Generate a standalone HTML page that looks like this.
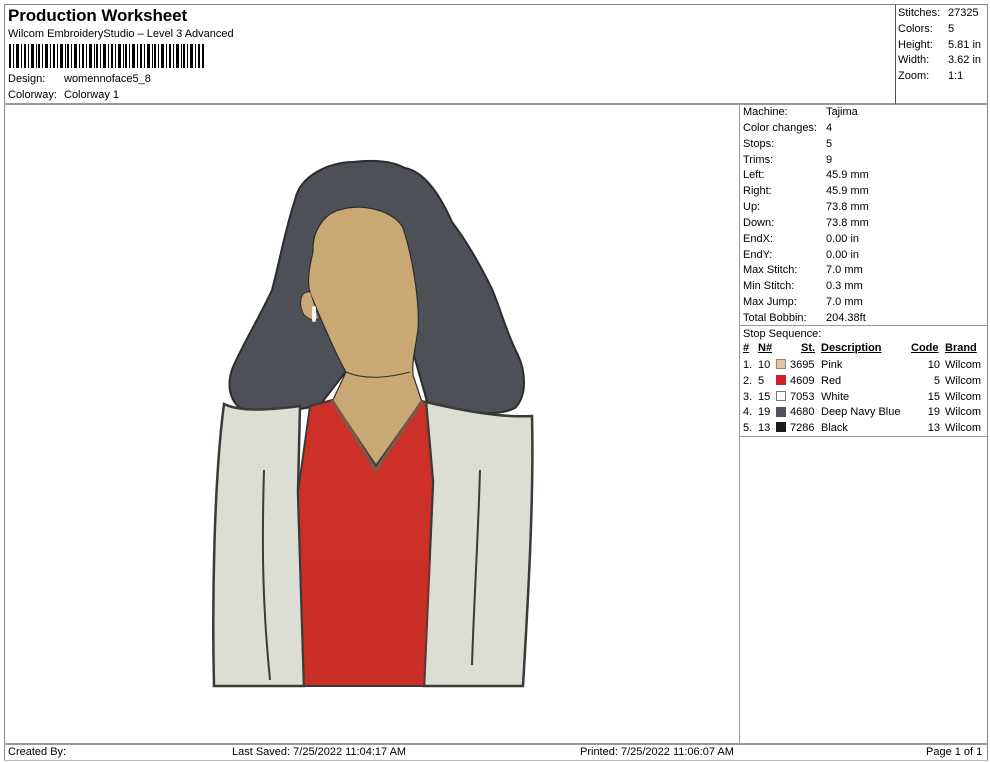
<!DOCTYPE html>
<html><head><meta charset="utf-8"><style>
*{margin:0;padding:0;box-sizing:border-box}
body{width:990px;height:762px;background:#fff;font-family:"Liberation Sans",Arial,sans-serif;color:#000;position:relative;overflow:hidden;font-size:11px}
.a{position:absolute;white-space:nowrap}
.ln{position:absolute;background:#888}
</style></head><body>
<div class="ln" style="left:4px;top:4px;width:983px;height:1px"></div>
<div class="ln" style="left:4px;top:4px;width:1px;height:757px"></div>
<div class="ln" style="left:987px;top:4px;width:1px;height:757px"></div>
<div class="ln" style="left:4px;top:103px;width:983px;height:2px;background:#999"></div>
<div class="ln" style="left:895px;top:4px;width:1px;height:100px;background:#555"></div>
<div class="ln" style="left:739px;top:104px;width:1px;height:640px;background:#999"></div>
<div class="ln" style="left:740px;top:325px;width:247px;height:1px;background:#999"></div>
<div class="ln" style="left:740px;top:436px;width:247px;height:1px;background:#999"></div>
<div class="ln" style="left:4px;top:743px;width:983px;height:2px;background:#999"></div>
<div class="ln" style="left:4px;top:760px;width:983px;height:1px;background:#bbb"></div>

<div class="a" style="left:8px;top:6px;font-size:17px;font-weight:bold;letter-spacing:-0.1px">Production Worksheet</div>
<div class="a" style="left:8px;top:28px">Wilcom EmbroideryStudio – Level 3 Advanced</div>
<svg class="a" style="left:9px;top:44px" width="196" height="24">
<g fill="#000">
<rect x="0" y="0" width="2" height="24"/><rect x="4" y="0" width="1" height="24"/><rect x="7" y="0" width="3" height="24"/><rect x="12" y="0" width="1" height="24"/><rect x="15" y="0" width="2" height="24"/><rect x="19" y="0" width="1" height="24"/><rect x="22" y="0" width="3" height="24"/><rect x="27" y="0" width="1" height="24"/><rect x="29" y="0" width="2" height="24"/><rect x="33" y="0" width="1" height="24"/><rect x="36" y="0" width="3" height="24"/><rect x="41" y="0" width="1" height="24"/><rect x="44" y="0" width="2" height="24"/><rect x="48" y="0" width="1" height="24"/><rect x="51" y="0" width="3" height="24"/><rect x="56" y="0" width="1" height="24"/><rect x="58" y="0" width="2" height="24"/><rect x="62" y="0" width="1" height="24"/><rect x="65" y="0" width="3" height="24"/><rect x="70" y="0" width="1" height="24"/><rect x="73" y="0" width="2" height="24"/><rect x="77" y="0" width="1" height="24"/><rect x="80" y="0" width="3" height="24"/><rect x="85" y="0" width="1" height="24"/><rect x="87" y="0" width="2" height="24"/><rect x="91" y="0" width="1" height="24"/><rect x="94" y="0" width="3" height="24"/><rect x="99" y="0" width="1" height="24"/><rect x="102" y="0" width="2" height="24"/><rect x="106" y="0" width="1" height="24"/><rect x="109" y="0" width="3" height="24"/><rect x="114" y="0" width="1" height="24"/><rect x="116" y="0" width="2" height="24"/><rect x="120" y="0" width="1" height="24"/><rect x="123" y="0" width="3" height="24"/><rect x="128" y="0" width="1" height="24"/><rect x="131" y="0" width="2" height="24"/><rect x="135" y="0" width="1" height="24"/><rect x="138" y="0" width="3" height="24"/><rect x="143" y="0" width="1" height="24"/><rect x="145" y="0" width="2" height="24"/><rect x="149" y="0" width="1" height="24"/><rect x="152" y="0" width="3" height="24"/><rect x="157" y="0" width="1" height="24"/><rect x="160" y="0" width="2" height="24"/><rect x="164" y="0" width="1" height="24"/><rect x="167" y="0" width="3" height="24"/><rect x="172" y="0" width="1" height="24"/><rect x="174" y="0" width="2" height="24"/><rect x="178" y="0" width="1" height="24"/><rect x="181" y="0" width="3" height="24"/><rect x="186" y="0" width="1" height="24"/><rect x="189" y="0" width="2" height="24"/><rect x="193" y="0" width="2" height="24"/>
</g></svg>
<div class="a" style="left:8px;top:73px">Design:</div><div class="a" style="left:64px;top:73px">womennoface5_8</div>
<div class="a" style="left:8px;top:89px">Colorway:</div><div class="a" style="left:64px;top:89px">Colorway 1</div>

<div class="a" style="left:898px;top:6px;line-height:15.8px">Stitches:<br>Colors:<br>Height:<br>Width:<br>Zoom:</div>
<div class="a" style="left:948px;top:6px;line-height:15.8px">27325<br>5<br>5.81 in<br>3.62 in<br>1:1</div>

<div class="a" style="left:743px;top:105px;line-height:15.85px">Machine:<br>Color changes:<br>Stops:<br>Trims:<br>Left:<br>Right:<br>Up:<br>Down:<br>EndX:<br>EndY:<br>Max Stitch:<br>Min Stitch:<br>Max Jump:<br>Total Bobbin:<br>Stop Sequence:</div>
<div class="a" style="left:826px;top:105px;line-height:15.85px">Tajima<br>4<br>5<br>9<br>45.9 mm<br>45.9 mm<br>73.8 mm<br>73.8 mm<br>0.00 in<br>0.00 in<br>7.0 mm<br>0.3 mm<br>7.0 mm<br>204.38ft</div>

<div class="a" style="left:743px;top:342px;font-weight:bold;text-decoration:underline">#</div>
<div class="a" style="left:758px;top:342px;font-weight:bold;text-decoration:underline">N#</div>
<div class="a" style="left:801px;top:342px;font-weight:bold;text-decoration:underline">St.</div>
<div class="a" style="left:821px;top:342px;font-weight:bold;text-decoration:underline">Description</div>
<div class="a" style="left:911px;top:342px;font-weight:bold;text-decoration:underline">Code</div>
<div class="a" style="left:945px;top:342px;font-weight:bold;text-decoration:underline">Brand</div>
<div class="a" style="left:743px;top:358px;line-height:15.8px">1.<br>2.<br>3.<br>4.<br>5.</div>
<div class="a" style="left:758px;top:358px;line-height:15.8px">10<br>5<br>15<br>19<br>13</div>
<div class="a" style="left:776px;top:359px;width:10px;height:10px;background:#e3c59e;border:1px solid #888"></div>
<div class="a" style="left:776px;top:375px;width:10px;height:10px;background:#d0202a"></div>
<div class="a" style="left:776px;top:391px;width:10px;height:10px;background:#fff;border:1px solid #777"></div>
<div class="a" style="left:776px;top:407px;width:10px;height:10px;background:#50525c"></div>
<div class="a" style="left:776px;top:422px;width:10px;height:10px;background:#1a1a1a"></div>
<div class="a" style="left:790px;top:358px;line-height:15.8px">3695<br>4609<br>7053<br>4680<br>7286</div>
<div class="a" style="left:821px;top:358px;line-height:15.8px">Pink<br>Red<br>White<br>Deep Navy Blue<br>Black</div>
<div class="a" style="left:920px;top:358px;width:20px;text-align:right;line-height:15.8px">10<br>5<br>15<br>19<br>13</div>
<div class="a" style="left:945px;top:358px;line-height:15.8px">Wilcom<br>Wilcom<br>Wilcom<br>Wilcom<br>Wilcom</div>

<svg class="a" style="left:0;top:0" width="739" height="743">
<path d="M353,162 C330,162 300,175 295,200 C285,230 280,260 272,290 C258,320 245,340 233,367 C226,385 230,400 240,408 C260,415 290,412 320,405 L347,370 L413,352 L428,405 C460,412 495,418 515,408 C528,395 525,370 518,355 C505,330 498,300 490,285 C475,255 462,235 452,222 C440,195 425,172 405,168 C390,160 370,160 353,162 Z" fill="#4e5058" stroke="#2c2c2e" stroke-width="2"/>
<path d="M313,252 C312,230 325,212 343,209 C365,203 395,212 403,228 C412,255 420,300 418,330 C415,350 412,360 413,375 L422,402 L376,465 L332,402 L346,372 C340,362 325,330 313,300 C308,290 306,280 313,252 Z" fill="#c9a874" stroke="#2c2c2e" stroke-width="1.2"/>
<path d="M310,292 C300,290 298,305 304,315 C310,320 315,322 318,318" fill="#c9a874" stroke="#2c2c2e" stroke-width="1"/>
<rect x="312" y="306" width="4" height="16" rx="2" fill="#f2f2f2"/>
<path d="M346,372 C360,378 380,380 410,372" fill="none" stroke="#2c2c2e" stroke-width="1"/>
<path d="M224,404 C240,412 270,410 300,406 L298,492 L304,686 L214,686 C212,600 214,480 224,404 Z" fill="#dcddd5" stroke="#3a3a36" stroke-width="2.5"/>
<path d="M426,402 C460,410 500,418 532,416 C534,500 528,600 523,686 L424,686 L433,482 Z" fill="#dcddd5" stroke="#3a3a36" stroke-width="2.5"/>
<path d="M264,470 C262,540 262,600 270,680" fill="none" stroke="#3a3a36" stroke-width="2"/>
<path d="M480,470 C478,540 474,600 472,665" fill="none" stroke="#3a3a36" stroke-width="2"/>
<path d="M310,406 L332,400 L376,466 L422,401 L426,402 L433,482 L424,686 L304,686 L298,492 Z" fill="#cd3029" stroke="#3a3a36" stroke-width="2"/>
<path d="M332,400 L376,470 L422,401" fill="none" stroke="#7a5a48" stroke-width="3"/>
<path d="M301,560 L431,560 L424,685 L305,685 Z" fill="#c52b25" opacity=".5"/>
</svg>

<div class="a" style="left:8px;top:746px">Created By:</div>
<div class="a" style="left:232px;top:746px">Last Saved: 7/25/2022 11:04:17 AM</div>
<div class="a" style="left:580px;top:746px">Printed: 7/25/2022 11:06:07 AM</div>
<div class="a" style="left:926px;top:746px">Page 1 of 1</div>
</body></html>
